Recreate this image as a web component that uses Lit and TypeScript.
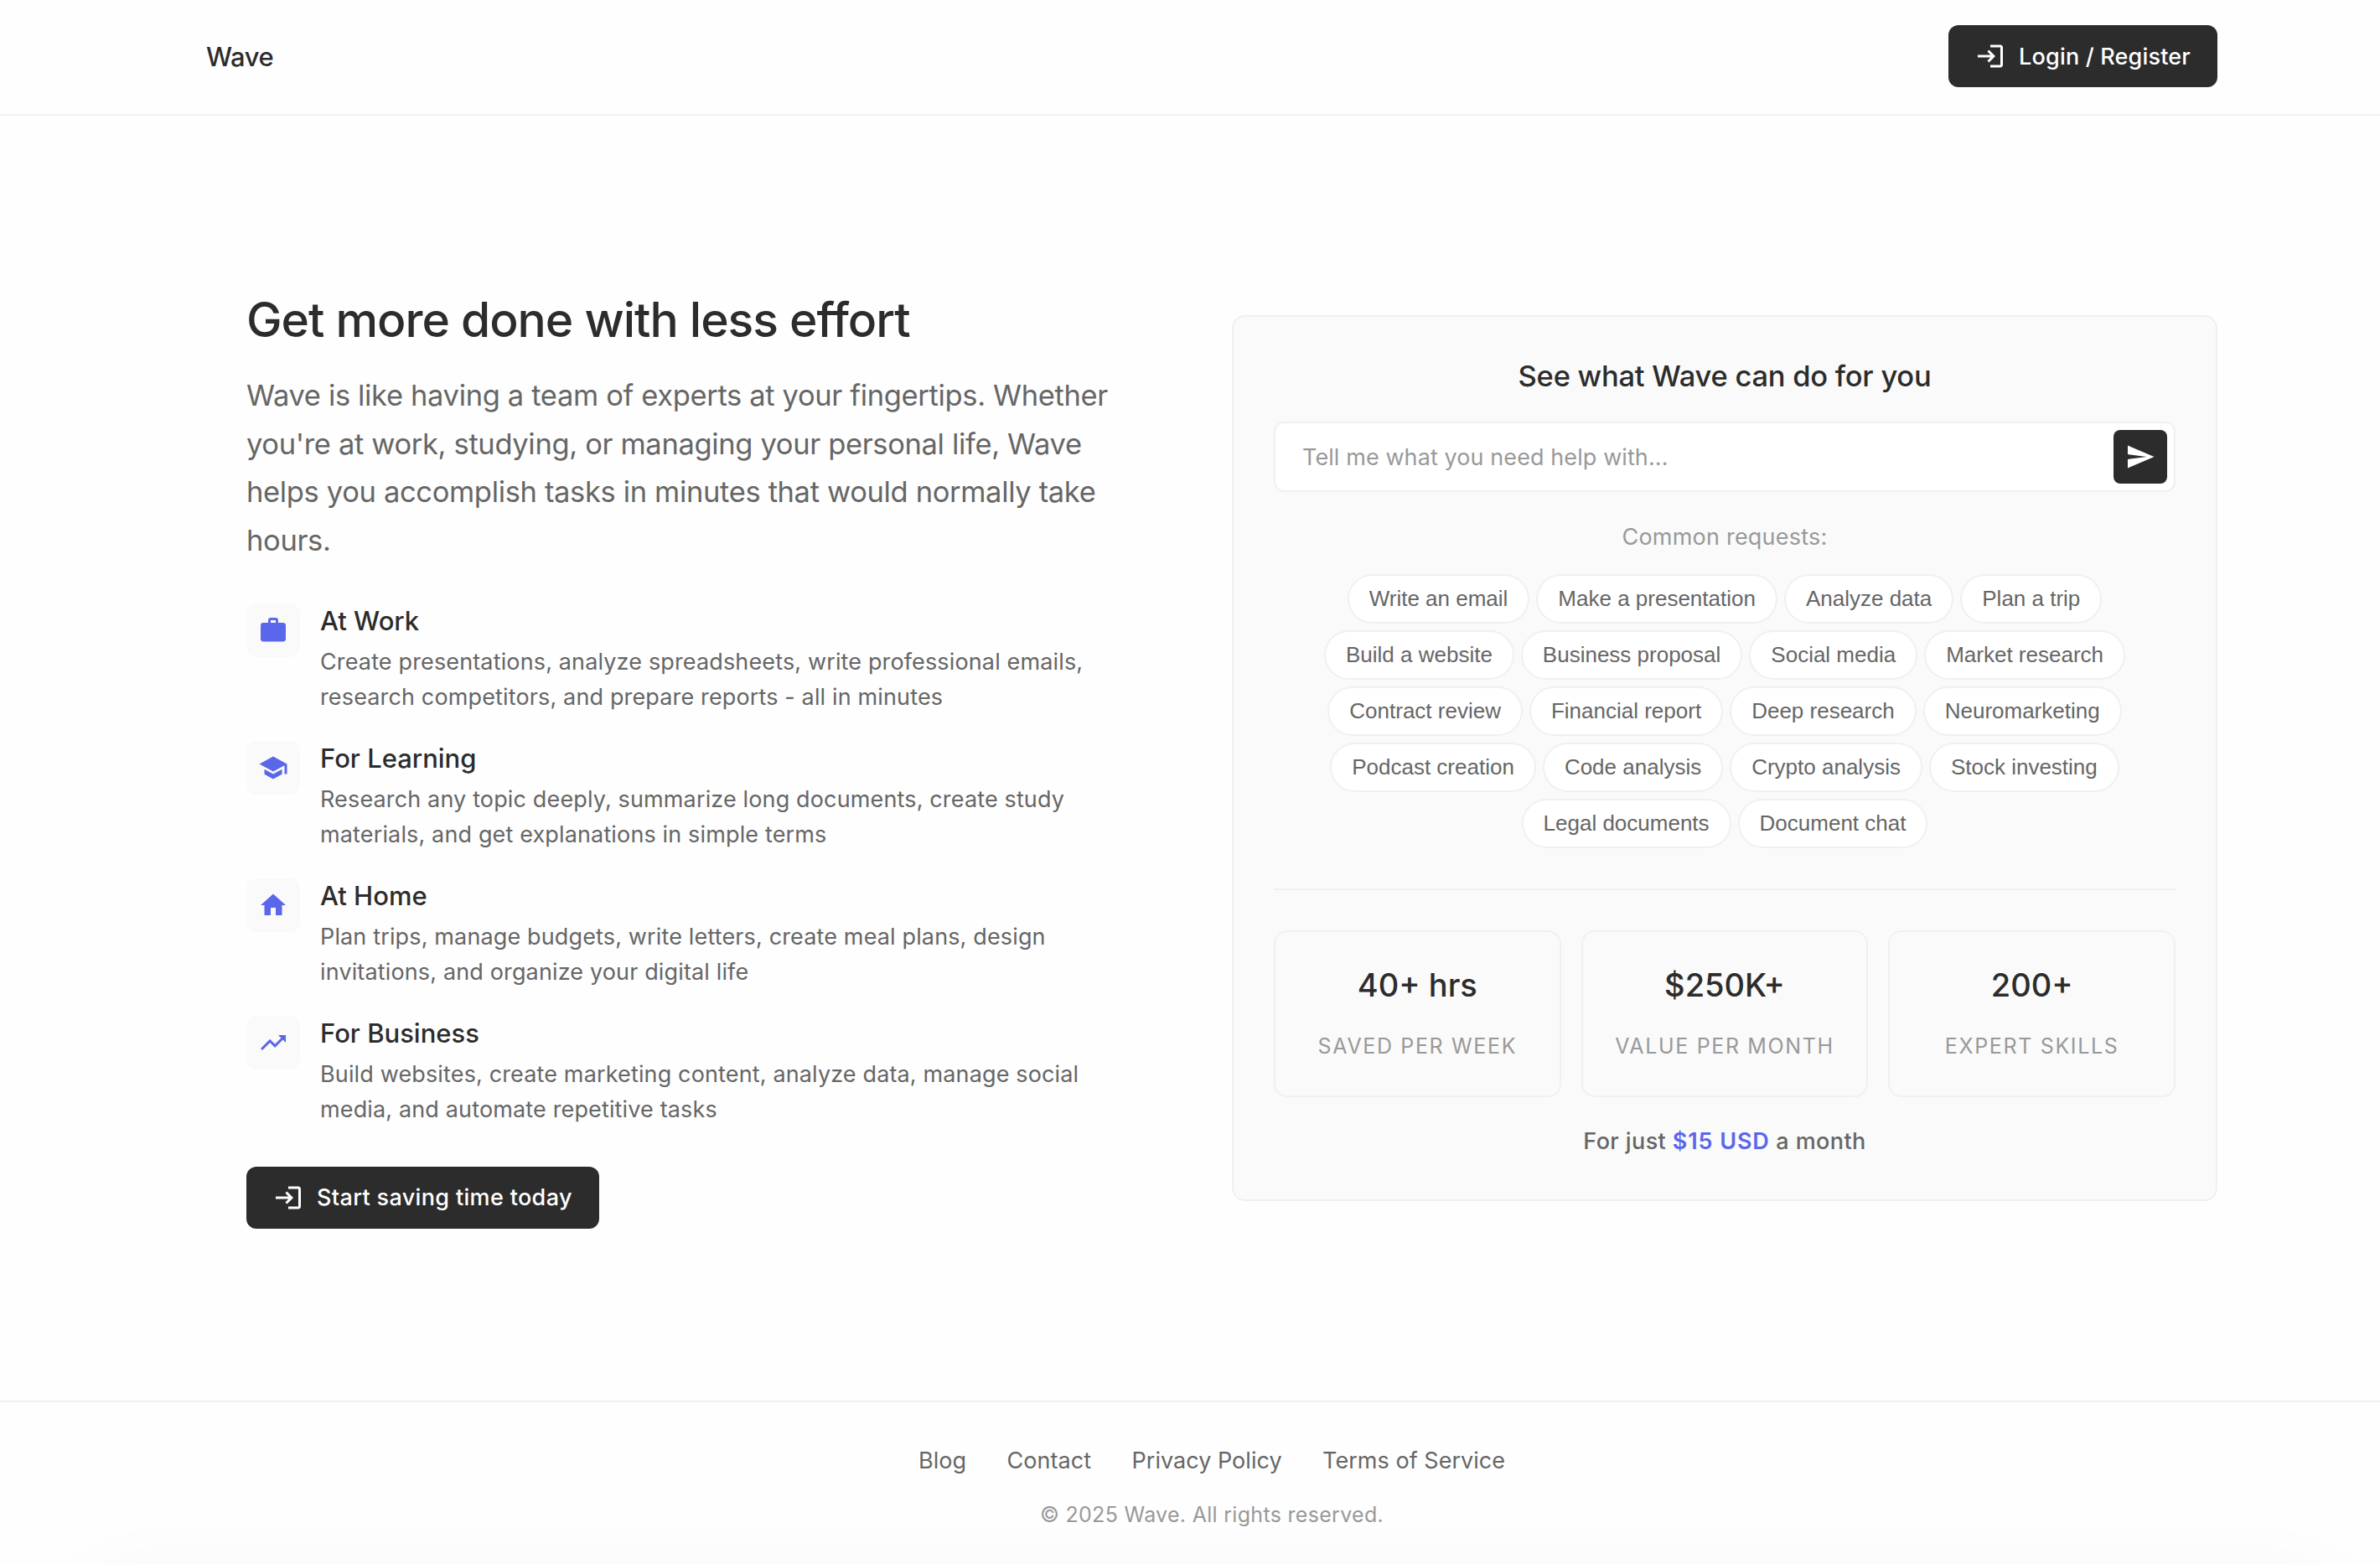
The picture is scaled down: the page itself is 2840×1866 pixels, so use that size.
import { html, css, svg, LitElement } from 'lit';
import { customElement, property } from 'lit/decorators.js';

const ICONS: Record<string, string> = {
  login:
    'M11 7 9.6 8.4l2.6 2.6H2v2h10.2l-2.6 2.6L11 17l5-5-5-5zm9 12h-8v2h8c1.1 0 2-.9 2-2V5c0-1.1-.9-2-2-2h-8v2h8v14z',
  work: 'M20 6h-4V4c0-1.11-.89-2-2-2h-4c-1.11 0-2 .89-2 2v2H4c-1.11 0-1.99.89-1.99 2L2 19c0 1.11.89 2 2 2h16c1.11 0 2-.89 2-2V8c0-1.11-.89-2-2-2zm-6 0h-4V4h4v2z',
  school: 'M5 13.18v4L12 21l7-3.82v-4L12 17l-7-3.82zM12 3 1 9l11 6 9-4.91V17h2V9L12 3z',
  home: 'M10 20v-6h4v6h5v-8h3L12 3 2 12h3v8z',
  trending: 'm16 6 2.29 2.29-4.88 4.88-4-4L2 16.59 3.41 18l6-6 4 4 6.3-6.29L22 12V6z',
  send: 'M2.01 21 23 12 2.01 3 2 10l15 2-15 2z',
};

const FEATURES = [
  {
    icon: 'work',
    title: 'At Work',
    text: 'Create presentations, analyze spreadsheets, write professional emails, research competitors, and prepare reports - all in minutes',
  },
  {
    icon: 'school',
    title: 'For Learning',
    text: 'Research any topic deeply, summarize long documents, create study materials, and get explanations in simple terms',
  },
  {
    icon: 'home',
    title: 'At Home',
    text: 'Plan trips, manage budgets, write letters, create meal plans, design invitations, and organize your digital life',
  },
  {
    icon: 'trending',
    title: 'For Business',
    text: 'Build websites, create marketing content, analyze data, manage social media, and automate repetitive tasks',
  },
];

const REQUESTS = [
  'Write an email',
  'Make a presentation',
  'Analyze data',
  'Plan a trip',
  'Build a website',
  'Business proposal',
  'Social media',
  'Market research',
  'Contract review',
  'Financial report',
  'Deep research',
  'Neuromarketing',
  'Podcast creation',
  'Code analysis',
  'Crypto analysis',
  'Stock investing',
  'Legal documents',
  'Document chat',
];

const STATS = [
  { value: '40+ hrs', label: 'Saved per week' },
  { value: '$250K+', label: 'Value per month' },
  { value: '200+', label: 'Expert skills' },
];

const LINKS = ['Blog', 'Contact', 'Privacy Policy', 'Terms of Service'];

@customElement('wave-icon')
export class WaveIcon extends LitElement {
  @property() name = '';

  static styles = css`
    :host {
      display: block;
      flex: none;
      width: 36px;
      height: 36px;
    }
    svg {
      display: block;
      width: 100%;
      height: 100%;
      fill: currentColor;
    }
  `;

  render() {
    return html`<svg viewBox="0 0 24 24">${svg`<path d=${ICONS[this.name]}></path>`}</svg>`;
  }
}

@customElement('wave-feature')
export class WaveFeature extends LitElement {
  @property() icon = '';
  @property() heading = '';
  @property() text = '';

  static styles = css`
    :host {
      display: flex;
      align-items: flex-start;
      gap: 24px;
      height: 132px;
    }
    .badge {
      display: flex;
      flex: none;
      align-items: center;
      justify-content: center;
      width: 64px;
      height: 64px;
      border-radius: 12px;
      background: #fafafa;
      color: #5b67ea;
    }
    .title {
      margin: 0 0 7px;
      font-size: 31px;
      font-weight: 500;
      line-height: 42px;
      color: #2c2c2c;
    }
    .text {
      margin: 0;
      font-size: 27px;
      line-height: 42px;
      letter-spacing: 0.14px;
      color: #666;
    }
  `;

  render() {
    return html`
      <div class="badge"><wave-icon name=${this.icon}></wave-icon></div>
      <div>
        <h3 class="title">${this.heading}</h3>
        <p class="text">${this.text}</p>
      </div>
    `;
  }
}

@customElement('app-root')
export class AppRoot extends LitElement {
  static styles = css`
    :host {
      position: relative;
      display: flex;
      flex-direction: column;
      box-sizing: border-box;
      width: 100%;
      height: 1866px;
      overflow: hidden;
      background: #fefefe;
      color: #2c2c2c;
      font-family: Inter, 'Liberation Sans', sans-serif;
    }
    h1,
    h2,
    p {
      margin: 0;
    }

    .header {
      display: flex;
      align-items: center;
      justify-content: space-between;
      box-sizing: border-box;
      height: 138px;
      padding: 0 194px 2px 246px;
      border-bottom: 2px solid #f0f0f0;
    }
    .brand {
      font-size: 31px;
      font-weight: 500;
      letter-spacing: -0.4px;
    }
    .button {
      display: inline-flex;
      align-items: center;
      gap: 16px;
      height: 74px;
      padding: 0 32px;
      border: 0;
      border-radius: 12px;
      background: #2c2c2c;
      color: #fff;
      font: 500 27px Inter, 'Liberation Sans', sans-serif;
      letter-spacing: 0.18px;
    }
    .button.wide {
      letter-spacing: 0.35px;
    }

    .main {
      display: grid;
      flex: 1;
      grid-template-columns: 1fr 1fr;
      gap: 48px;
      align-items: center;
      padding: 0 194px 0 246px;
    }
    .intro {
      padding: 0 48px;
    }
    .headline {
      margin-bottom: 22px;
      font-size: 57px;
      font-weight: 500;
      line-height: 78px;
      letter-spacing: -1.04px;
    }
    .lead {
      margin-bottom: 46.6px;
      font-size: 34.5px;
      line-height: 57.6px;
      letter-spacing: -0.35px;
      color: #666;
    }
    .features {
      display: flex;
      flex-direction: column;
      gap: 32px;
      margin-bottom: 48px;
    }

    .card {
      box-sizing: border-box;
      padding: 48px;
      border: 2px solid #f0f0f0;
      border-radius: 16px;
      background: #fafafa;
      text-align: center;
    }
    .card-title {
      margin-bottom: 31px;
      font-size: 34.5px;
      font-weight: 500;
      line-height: 46px;
      letter-spacing: -0.25px;
    }
    .prompt {
      display: flex;
      align-items: center;
      justify-content: space-between;
      box-sizing: border-box;
      height: 84px;
      padding: 0 8px 0 32px;
      border: 2px solid #f0f0f0;
      border-radius: 12px;
      background: #fff;
    }
    .prompt-input {
      flex: 1;
      min-width: 0;
      padding: 0;
      border: 0;
      outline: 0;
      background: none;
      font: 400 27px Inter, 'Liberation Sans', sans-serif;
      letter-spacing: 0.09px;
    }
    .prompt-input::placeholder {
      color: #999;
      opacity: 1;
    }
    .send {
      display: flex;
      align-items: center;
      justify-content: center;
      width: 64px;
      height: 64px;
      padding: 0;
      border: 0;
      border-radius: 8px;
      background: #2c2c2c;
      color: #fff;
    }
    .hint {
      margin: 33px 0 23px;
      font-size: 27px;
      line-height: 42px;
      letter-spacing: 0.22px;
      color: #999;
    }
    .chips {
      display: flex;
      flex-wrap: wrap;
      justify-content: center;
      gap: 8px;
      padding: 0 48px 48px;
    }
    .chip {
      padding: 12px 24px;
      border: 2px solid #f0f0f0;
      border-radius: 32px;
      background: #fff;
      color: #666;
      font: 400 26px/31px 'Liberation Sans', Arial, sans-serif;
    }
    .stats {
      display: grid;
      grid-template-columns: repeat(3, 1fr);
      gap: 24px;
      padding-top: 48px;
      border-top: 2px solid #f0f0f0;
    }
    .stat {
      padding: 32px 0 39px;
      border: 2px solid #f0f0f0;
      border-radius: 16px;
    }
    .value {
      margin-bottom: 22px;
      font-size: 38px;
      font-weight: 500;
      line-height: 62px;
    }
    .label {
      font-size: 25px;
      line-height: 40px;
      letter-spacing: 1.65px;
      text-transform: uppercase;
      color: #999;
    }
    .price {
      margin-top: 32px;
      font-size: 27px;
      font-weight: 500;
      line-height: 42px;
      letter-spacing: 0.4px;
      color: #666;
    }
    .amount {
      font-weight: 600;
      letter-spacing: 0.9px;
      color: #5b67ea;
    }

    .footer {
      box-sizing: border-box;
      height: 195px;
      padding: 49px 0 0 52px;
      border-top: 2px solid #f0f0f0;
      text-align: center;
    }
    .links {
      display: flex;
      justify-content: center;
      gap: 48.5px;
      margin-bottom: 23px;
      font-size: 27px;
      line-height: 42px;
      letter-spacing: 0.03px;
    }
    .link {
      color: #666;
      text-decoration: none;
    }
    .copyright {
      font-size: 25px;
      line-height: 40px;
      letter-spacing: 0.3px;
      color: #999;
    }

    .dock-shadow {
      position: absolute;
      top: 1880px;
      left: 106px;
      width: 2680px;
      height: 200px;
      border-radius: 24px;
      box-shadow: 0 0 96px rgba(0, 0, 0, 0.035);
      pointer-events: none;
    }
  `;

  render() {
    return html`
      <header class="header">
        <div class="brand">Wave</div>
        <button class="button"><wave-icon name="login"></wave-icon>Login / Register</button>
      </header>

      <main class="main">
        <section class="intro">
          <h1 class="headline">Get more done with less effort</h1>
          <p class="lead">
            Wave is like having a team of experts at your fingertips. Whether you're at work,
            studying, or managing your personal life, Wave helps you accomplish tasks in minutes
            that would normally take hours.
          </p>
          <div class="features">
            ${FEATURES.map(
              (f) => html`<wave-feature icon=${f.icon} heading=${f.title} text=${f.text}></wave-feature>`
            )}
          </div>
          <button class="button wide"><wave-icon name="login"></wave-icon>Start saving time today</button>
        </section>

        <section class="card">
          <h2 class="card-title">See what Wave can do for you</h2>
          <div class="prompt">
            <input class="prompt-input" placeholder="Tell me what you need help with..." />
            <button class="send"><wave-icon name="send"></wave-icon></button>
          </div>
          <p class="hint">Common requests:</p>
          <div class="chips">${REQUESTS.map((r) => html`<button class="chip">${r}</button>`)}</div>
          <div class="stats">
            ${STATS.map(
              (s) => html`
                <div class="stat">
                  <div class="value">${s.value}</div>
                  <div class="label">${s.label}</div>
                </div>
              `
            )}
          </div>
          <p class="price">For just <span class="amount">$15 USD</span> a month</p>
        </section>
      </main>

      <footer class="footer">
        <nav class="links">${LINKS.map((l) => html`<a class="link" href="#">${l}</a>`)}</nav>
        <p class="copyright">© 2025 Wave. All rights reserved.</p>
      </footer>
      <div class="dock-shadow"></div>
    `;
  }
}
